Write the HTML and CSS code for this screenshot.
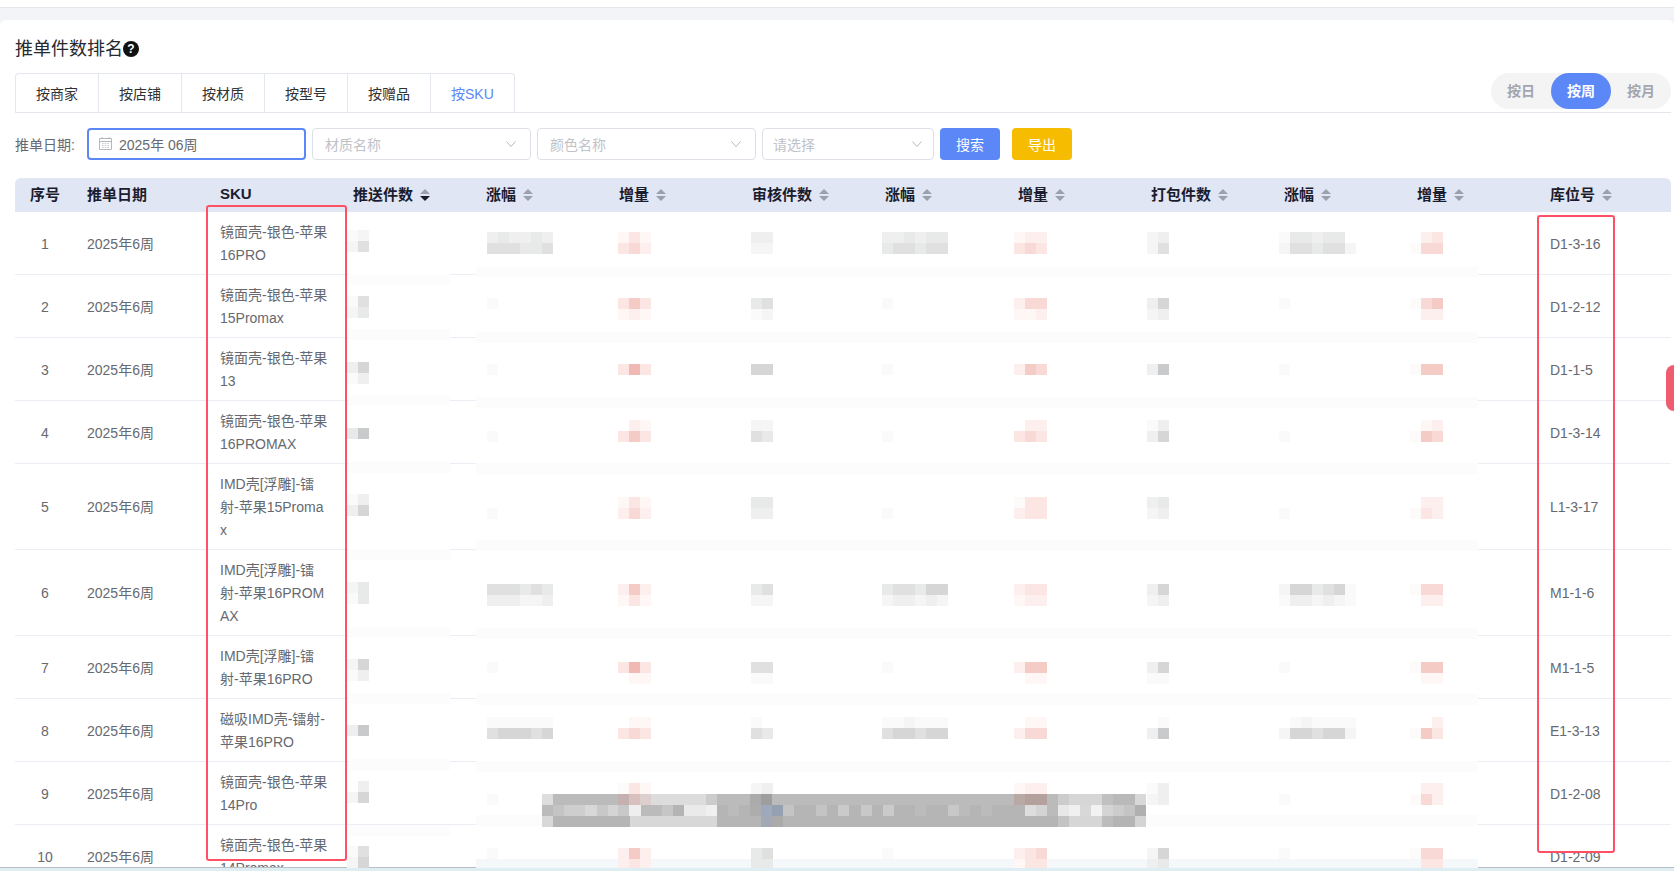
FILE: index.html
```html
<!DOCTYPE html>
<html lang="zh-CN">
<head>
<meta charset="utf-8">
<title>推单件数排名</title>
<link rel="stylesheet" href="styles.css">
</head>
<body>
<div class="page">
  <div class="topbar"></div>
  <div class="band"></div>
  <main class="card">
    <h1 class="title">推单件数排名<span class="help">?</span></h1>
    <div class="tabbar">
      <div class="tabs">
        <div class="tab">按商家</div>
        <div class="tab">按店铺</div>
        <div class="tab">按材质</div>
        <div class="tab">按型号</div>
        <div class="tab">按赠品</div>
        <div class="tab active">按SKU</div>
      </div>
      <div class="pill">
        <div class="pill-item">按日</div>
        <div class="pill-item on">按周</div>
        <div class="pill-item">按月</div>
      </div>
    </div>
    <div class="filters">
      <label class="flabel">推单日期:</label>
      <div class="field date">
        <svg class="cal" viewBox="0 0 13 13"><path d="M.5 1.5h12v11H.5zM.5 4.5h12M3 0v2M10 0v2" fill="none" stroke="#b4b7bd"/><path d="M3 6.5h7M3 8.5h7M3 10.5h7" stroke="#c4c7cc" stroke-dasharray="1.5 1.2"/></svg>
        <span>2025年 06周</span>
      </div>
      <div class="field"><span class="ph">材质名称</span><svg class="chev" viewBox="0 0 10 6"><path d="M.5.5 5 5.5 9.5.5" fill="none" stroke="#b4b7bd"/></svg></div>
      <div class="field"><span class="ph">颜色名称</span><svg class="chev" viewBox="0 0 10 6"><path d="M.5.5 5 5.5 9.5.5" fill="none" stroke="#b4b7bd"/></svg></div>
      <div class="field w172"><span class="ph">请选择</span><svg class="chev" viewBox="0 0 10 6"><path d="M.5.5 5 5.5 9.5.5" fill="none" stroke="#b4b7bd"/></svg></div>
      <button class="btn search">搜索</button>
      <button class="btn export">导出</button>
    </div>
    <table class="grid">
      <colgroup>
        <col class="c-no"><col class="c"><col class="c"><col class="c"><col class="c"><col class="c"><col class="c"><col class="c"><col class="c"><col class="c"><col class="c"><col class="c"><col class="c-last">
      </colgroup>
      <thead>
        <tr>
          <th class="no">序号</th>
          <th>推单日期</th>
          <th>SKU</th>
          <th>推送件数<svg class="sort" viewBox="0 0 10 12"><path d="M5 0l5 5H0z"/><path class="down" d="M0 7h10l-5 5z"/></svg></th>
          <th>涨幅<svg class="sort" viewBox="0 0 10 12"><path d="M5 0l5 5H0zM0 7h10l-5 5z"/></svg></th>
          <th>增量<svg class="sort" viewBox="0 0 10 12"><path d="M5 0l5 5H0zM0 7h10l-5 5z"/></svg></th>
          <th>审核件数<svg class="sort" viewBox="0 0 10 12"><path d="M5 0l5 5H0zM0 7h10l-5 5z"/></svg></th>
          <th>涨幅<svg class="sort" viewBox="0 0 10 12"><path d="M5 0l5 5H0zM0 7h10l-5 5z"/></svg></th>
          <th>增量<svg class="sort" viewBox="0 0 10 12"><path d="M5 0l5 5H0zM0 7h10l-5 5z"/></svg></th>
          <th>打包件数<svg class="sort" viewBox="0 0 10 12"><path d="M5 0l5 5H0zM0 7h10l-5 5z"/></svg></th>
          <th>涨幅<svg class="sort" viewBox="0 0 10 12"><path d="M5 0l5 5H0zM0 7h10l-5 5z"/></svg></th>
          <th>增量<svg class="sort" viewBox="0 0 10 12"><path d="M5 0l5 5H0zM0 7h10l-5 5z"/></svg></th>
          <th>库位号<svg class="sort" viewBox="0 0 10 12"><path d="M5 0l5 5H0zM0 7h10l-5 5z"/></svg></th>
        </tr>
      </thead>
      <tbody>
        <tr><td class="no">1</td><td>2025年6周</td><td class="sku">镜面壳-银色-苹果16PRO</td><td></td><td></td><td></td><td></td><td></td><td></td><td></td><td></td><td></td><td>D1-3-16</td></tr>
        <tr><td class="no">2</td><td>2025年6周</td><td class="sku">镜面壳-银色-苹果15Promax</td><td></td><td></td><td></td><td></td><td></td><td></td><td></td><td></td><td></td><td>D1-2-12</td></tr>
        <tr><td class="no">3</td><td>2025年6周</td><td class="sku">镜面壳-银色-苹果13</td><td></td><td></td><td></td><td></td><td></td><td></td><td></td><td></td><td></td><td>D1-1-5</td></tr>
        <tr><td class="no">4</td><td>2025年6周</td><td class="sku">镜面壳-银色-苹果16PROMAX</td><td></td><td></td><td></td><td></td><td></td><td></td><td></td><td></td><td></td><td>D1-3-14</td></tr>
        <tr><td class="no">5</td><td>2025年6周</td><td class="sku">IMD壳[浮雕]-镭射-苹果15Promax</td><td></td><td></td><td></td><td></td><td></td><td></td><td></td><td></td><td></td><td>L1-3-17</td></tr>
        <tr><td class="no">6</td><td>2025年6周</td><td class="sku">IMD壳[浮雕]-镭射-苹果16PROMAX</td><td></td><td></td><td></td><td></td><td></td><td></td><td></td><td></td><td></td><td>M1-1-6</td></tr>
        <tr><td class="no">7</td><td>2025年6周</td><td class="sku">IMD壳[浮雕]-镭射-苹果16PRO</td><td></td><td></td><td></td><td></td><td></td><td></td><td></td><td></td><td></td><td>M1-1-5</td></tr>
        <tr><td class="no">8</td><td>2025年6周</td><td class="sku">磁吸IMD壳-镭射-苹果16PRO</td><td></td><td></td><td></td><td></td><td></td><td></td><td></td><td></td><td></td><td>E1-3-13</td></tr>
        <tr><td class="no">9</td><td>2025年6周</td><td class="sku">镜面壳-银色-苹果14Pro</td><td></td><td></td><td></td><td></td><td></td><td></td><td></td><td></td><td></td><td>D1-2-08</td></tr>
        <tr><td class="no">10</td><td>2025年6周</td><td class="sku">镜面壳-银色-苹果14Promax</td><td></td><td></td><td></td><td></td><td></td><td></td><td></td><td></td><td></td><td>D1-2-09</td></tr>
      </tbody>
    </table>
  </main>
  <div class="foot"></div>

  <!-- pixelated redaction that lies over the table -->
  <svg class="mosaic" width="1674" height="868" viewBox="0 0 1674 868">
    <path class="bandpatch" d="M476 271.5H1478M476 337.5H1478M476 402.5H1478M476 468.5H1478M476 545.5H1478M476 633.5H1478M476 699.5H1478M476 766.5H1478M476 820.5H1478M348 279.5H450M348 334.5H450M348 400.5H450M348 467.5H450M348 554.5H450M348 632.5H450M348 698.5H450M348 764.5H450M348 830.5H450"/>
    <path class="botpatch" d="M476 863.5H1478"/>

    <!-- row 1 -->
    <g transform="translate(0 235.5)"><path class="g1" d="M347 0h11"/><path class="g2" d="M358 0h11"/></g>
    <g transform="translate(0 246.5)"><path class="g2" d="M347 0h11"/><path class="g5" d="M358 0h11"/></g>
    <g transform="translate(0 237.5)"><path class="g1" d="M1279 0h11"/><path class="g2" d="M1147 0h11"/><path class="g3" d="M487 0h11M509 0h22M542 0h11M751 0h22M882 0h22M915 0h11M1158 0h11M1312 0h11"/><path class="g4" d="M498 0h11M531 0h11M904 0h11M926 0h22M1290 0h22M1323 0h22"/><path class="p1" d="M618 0h11M640 0h11M1014 0h11"/><path class="p2" d="M1025 0h22M1421 0h11"/><path class="p3" d="M629 0h11M1432 0h11"/></g>
    <g transform="translate(0 248.5)"><path class="p0" d="M1410 0h11"/><path class="g2" d="M751 0h22M1147 0h11M1279 0h11M1345 0h11"/><path class="g4" d="M520 0h22M882 0h11M915 0h11M1312 0h11"/><path class="g5" d="M487 0h33M542 0h11M893 0h22M926 0h22M1158 0h11M1290 0h22M1323 0h22"/><path class="p2" d="M640 0h11"/><path class="p3" d="M618 0h11M1014 0h11M1036 0h11"/><path class="p4" d="M629 0h11M1025 0h11M1421 0h22"/></g>

    <!-- row 2 -->
    <g transform="translate(0 301.5)"><path class="g1" d="M347 0h11"/><path class="g5" d="M358 0h11"/></g>
    <g transform="translate(0 312.5)"><path class="g2" d="M347 0h11"/><path class="g4" d="M358 0h11"/></g>
    <g transform="translate(0 303.5)"><path class="p0" d="M1410 0h11"/><path class="g1" d="M487 0h11M882 0h11M1279 0h11"/><path class="g3" d="M1147 0h11"/><path class="g4" d="M751 0h11"/><path class="g5" d="M762 0h11"/><path class="g6" d="M1158 0h11"/><path class="p2" d="M1014 0h11"/><path class="p3" d="M618 0h11M640 0h11"/><path class="p4" d="M1025 0h22M1421 0h11"/><path class="p5" d="M629 0h11M1432 0h11"/></g>
    <g transform="translate(0 314.5)"><path class="g1" d="M751 0h11"/><path class="g2" d="M762 0h11M1147 0h11"/><path class="g3" d="M1158 0h11"/><path class="p1" d="M618 0h11M640 0h11M1014 0h22"/><path class="p2" d="M629 0h11M1036 0h11M1421 0h22"/></g>

    <!-- row 3 -->
    <g transform="translate(0 367.5)"><path class="g3" d="M347 0h11"/><path class="g6" d="M358 0h11"/></g>
    <g transform="translate(0 378.5)"><path class="g1" d="M347 0h11"/><path class="g3" d="M358 0h11"/></g>
    <g transform="translate(0 369.5)"><path class="p0" d="M1410 0h11"/><path class="g1" d="M487 0h11M882 0h11M1279 0h11"/><path class="g3" d="M1147 0h11"/><path class="g6" d="M751 0h22"/><path class="g7" d="M1158 0h11"/><path class="p2" d="M1014 0h11"/><path class="p3" d="M618 0h11M640 0h11"/><path class="p4" d="M1036 0h11"/><path class="p5" d="M1025 0h11M1421 0h22"/><path class="p6" d="M629 0h11"/></g>

    <!-- row 4 -->
    <g transform="translate(0 433.5)"><path class="g4" d="M347 0h11"/><path class="g7" d="M358 0h11"/></g>
    <g transform="translate(0 425.5)"><path class="g1" d="M1147 0h11"/><path class="g2" d="M751 0h22"/><path class="g3" d="M1158 0h11"/><path class="p1" d="M640 0h11M1421 0h11"/><path class="p2" d="M629 0h11M1025 0h22M1432 0h11"/></g>
    <g transform="translate(0 436.5)"><path class="p0" d="M1410 0h11"/><path class="g1" d="M487 0h11M882 0h11M1279 0h11"/><path class="g3" d="M1147 0h11"/><path class="g4" d="M762 0h11"/><path class="g5" d="M751 0h11"/><path class="g6" d="M1158 0h11"/><path class="p3" d="M618 0h11M640 0h11M1014 0h11M1036 0h11"/><path class="p4" d="M1025 0h11M1432 0h11"/><path class="p5" d="M629 0h11M1421 0h11"/></g>

    <!-- row 5 -->
    <g transform="translate(0 499.5)"><path class="g1" d="M347 0h11"/><path class="g3" d="M358 0h11"/></g>
    <g transform="translate(0 510.5)"><path class="g3" d="M347 0h11"/><path class="g6" d="M358 0h11"/></g>
    <g transform="translate(0 502.5)"><path class="p0" d="M1014 0h11"/><path class="g3" d="M1147 0h11"/><path class="g4" d="M751 0h22M1158 0h11"/><path class="p1" d="M618 0h11M640 0h11"/><path class="p2" d="M1421 0h22"/><path class="p3" d="M629 0h11M1025 0h22"/></g>
    <g transform="translate(0 513.5)"><path class="p0" d="M1410 0h11"/><path class="g1" d="M487 0h11M882 0h11M1279 0h11"/><path class="g2" d="M1147 0h11"/><path class="g3" d="M751 0h22M1158 0h11"/><path class="p2" d="M618 0h11M640 0h11M1014 0h11M1432 0h11"/><path class="p3" d="M1025 0h22M1421 0h11"/><path class="p4" d="M629 0h11"/></g>

    <!-- row 6 -->
    <g transform="translate(0 587.5)"><path class="g2" d="M347 0h11"/><path class="g4" d="M358 0h11"/></g>
    <g transform="translate(0 598.5)"><path class="g1" d="M347 0h11"/><path class="g4" d="M358 0h11"/></g>
    <g transform="translate(0 589.5)"><path class="p0" d="M1410 0h11"/><path class="g1" d="M1345 0h11"/><path class="g2" d="M1279 0h11"/><path class="g3" d="M1147 0h11"/><path class="g4" d="M520 0h11M542 0h11M751 0h11M882 0h11M915 0h11M1312 0h11"/><path class="g5" d="M487 0h33M531 0h11M762 0h11M893 0h22M1323 0h11"/><path class="g6" d="M926 0h22M1158 0h11M1290 0h22M1334 0h11"/><path class="p2" d="M618 0h11M640 0h11M1014 0h11"/><path class="p3" d="M1025 0h22"/><path class="p4" d="M1421 0h22"/><path class="p5" d="M629 0h11"/></g>
    <g transform="translate(0 600.5)"><path class="g1" d="M1279 0h11M1345 0h11"/><path class="g2" d="M520 0h22M751 0h22M882 0h11M915 0h11M937 0h11M1147 0h11M1312 0h11M1334 0h11"/><path class="g3" d="M487 0h33M542 0h11M893 0h22M926 0h11M1158 0h11M1290 0h22M1323 0h11"/><path class="p1" d="M618 0h11M640 0h11M1014 0h11"/><path class="p2" d="M1025 0h22M1421 0h22"/><path class="p3" d="M629 0h11"/></g>

    <!-- row 7 -->
    <g transform="translate(0 664.5)"><path class="g2" d="M347 0h11"/><path class="g6" d="M358 0h11"/></g>
    <g transform="translate(0 675.5)"><path class="g1" d="M347 0h11"/><path class="g3" d="M358 0h11"/></g>
    <g transform="translate(0 667.5)"><path class="p0" d="M1410 0h11"/><path class="g1" d="M487 0h11M882 0h11M1279 0h11"/><path class="g3" d="M1147 0h11"/><path class="g5" d="M751 0h22"/><path class="g6" d="M1158 0h11"/><path class="p2" d="M1014 0h11"/><path class="p3" d="M618 0h11M640 0h11"/><path class="p5" d="M1025 0h22M1421 0h22"/><path class="p6" d="M629 0h11"/></g>
    <g transform="translate(0 678.5)"><path class="g1" d="M751 0h22M1147 0h22"/><path class="p1" d="M629 0h22M1025 0h22M1421 0h22"/></g>

    <!-- row 8 -->
    <g transform="translate(0 730.5)"><path class="g3" d="M347 0h11"/><path class="g7" d="M358 0h11"/></g>
    <g transform="translate(0 722.5)"><path class="g1" d="M487 0h66M751 0h11M882 0h66M1158 0h11M1290 0h66"/><path class="g2" d="M904 0h11M1301 0h11"/><path class="p1" d="M629 0h22M1025 0h22"/><path class="p2" d="M1432 0h11"/></g>
    <g transform="translate(0 733.5)"><path class="p0" d="M1410 0h11"/><path class="g2" d="M1279 0h11M1345 0h11"/><path class="g3" d="M1147 0h11"/><path class="g4" d="M762 0h11"/><path class="g5" d="M487 0h11M531 0h11M751 0h11M882 0h11M915 0h11M1312 0h11"/><path class="g6" d="M498 0h33M542 0h11M893 0h22M926 0h22M1290 0h22M1323 0h22"/><path class="g7" d="M1158 0h11"/><path class="p2" d="M1014 0h11"/><path class="p3" d="M618 0h11M640 0h11M1432 0h11"/><path class="p4" d="M629 0h11M1025 0h22"/><path class="p5" d="M1421 0h11"/></g>

    <!-- row 9 -->
    <g transform="translate(0 786.5)"><path class="g3" d="M358 0h11"/></g>
    <g transform="translate(0 797.5)"><path class="g2" d="M347 0h11"/><path class="g6" d="M358 0h11"/></g>
    <g transform="translate(0 788.5)"><path class="p0" d="M618 0h11"/><path class="g1" d="M1147 0h11"/><path class="g2" d="M751 0h11"/><path class="g3" d="M762 0h11M1158 0h11"/><path class="p1" d="M640 0h11M1014 0h11"/><path class="p2" d="M1025 0h22M1421 0h22"/><path class="p3" d="M629 0h11"/></g>
    <g transform="translate(0 799.5)"><path class="p0" d="M1410 0h11"/><path class="g1" d="M487 0h11M1279 0h11"/><path class="g2" d="M1147 0h11"/><path class="g3" d="M1158 0h11"/><path class="p2" d="M1432 0h11"/><path class="p4" d="M1421 0h11"/></g>

    <!-- row 10 -->
    <g transform="translate(0 851.5)"><path class="g1" d="M347 0h11"/><path class="g5" d="M358 0h11"/></g>
    <g transform="translate(0 862.5)"><path class="g2" d="M347 0h11"/><path class="g6" d="M358 0h11"/></g>
    <g transform="translate(0 853.5)"><path class="p0" d="M1410 0h11"/><path class="g1" d="M487 0h11M882 0h11M1279 0h11"/><path class="g2" d="M1147 0h11"/><path class="g4" d="M751 0h11"/><path class="g5" d="M762 0h11"/><path class="g6" d="M1158 0h11"/><path class="p2" d="M618 0h11M640 0h11M1014 0h11"/><path class="p3" d="M1025 0h11"/><path class="p4" d="M1036 0h11M1421 0h22"/><path class="p5" d="M629 0h11"/></g>
    <g transform="translate(0 864.5)"><path class="g3" d="M1147 0h11"/><path class="g4" d="M751 0h22M1158 0h11"/><path class="p1" d="M1014 0h11"/><path class="p2" d="M618 0h11M640 0h11"/><path class="p3" d="M629 0h11M1025 0h22M1421 0h22"/></g>

    <!-- wide strip -->
    <g class="strip" transform="translate(0 799)">
      <path stroke="#ddd" d="M542 0h11"/><path stroke="#bbb" d="M553 0h65M717 0h33M772 0h242M1047 0h11"/>
      <path stroke="#c4b0ae" d="M618 0h11"/><path stroke="#d8c0be" d="M629 0h11"/><path stroke="#dccfce" d="M640 0h11"/>
      <path stroke="#dcdcdc" d="M651 0h55"/><path stroke="#ccc" d="M706 0h11M1058 0h11"/>
      <path stroke="#ababab" d="M750 0h11"/><path stroke="#9e9e9e" d="M761 0h11"/>
      <path stroke="#b9a9a5" d="M1014 0h11"/><path stroke="#b4a09c" d="M1025 0h22"/>
      <path stroke="#d6d6d6" d="M1069 0h33"/><path stroke="#c0c0c0" d="M1102 0h11"/><path stroke="#b9b9b9" d="M1113 0h22"/><path stroke="#d8d8d8" d="M1135 0h11"/>
    </g>
    <g class="strip" transform="translate(0 810)">
      <path stroke="#b5b5b5" d="M717 0h429"/>
      <path stroke="#bbb" d="M542 0h11M641 0h21M728 0h11M915 0h11M959 0h11M981 0h11M1047 0h11"/>
      <path stroke="#c4c4c4" d="M553 0h11M783 0h11M816 0h11M1124 0h11"/><path stroke="#cecece" d="M564 0h21"/><path stroke="#d8d8d8" d="M585 0h12M1080 0h11"/>
      <path stroke="#c8c8c8" d="M597 0h11M618 0h11M861 0h11M948 0h11"/><path stroke="#d4d4d4" d="M608 0h10M1036 0h11M1102 0h11"/><path stroke="#eee" d="M629 0h12"/>
      <path stroke="#c6c6c6" d="M662 0h11"/><path stroke="#b4b4b4" d="M673 0h11"/><path stroke="#eaeaea" d="M684 0h22"/><path stroke="#f0f0f0" d="M706 0h11M1069 0h11"/>
      <path stroke="#adadad" d="M750 0h11"/><path stroke="#a0a8bb" d="M761 0h11"/><path stroke="#95a0b0" d="M772 0h11"/>
      <path stroke="#cacaca" d="M838 0h11M883 0h11"/><path stroke="#ddd" d="M1025 0h11"/><path stroke="#e8e8e8" d="M1058 0h11"/><path stroke="#f2f2f2" d="M1091 0h11"/><path stroke="#ccc" d="M1113 0h11"/><path stroke="#b0b0b0" d="M1135 0h11"/>
    </g>
    <g class="strip" transform="translate(0 821)">
      <path stroke="#d8d8d8" d="M542 0h11M630 0h87"/><path stroke="#b5b5b5" d="M553 0h77M717 0h44M783 0h275"/>
      <path stroke="#a2a8b5" d="M761 0h11"/><path stroke="#aaa" d="M772 0h11"/>
      <path stroke="#c4c4c4" d="M1058 0h11"/><path stroke="#d6d6d6" d="M1069 0h33"/><path stroke="#bcbcbc" d="M1102 0h11"/><path stroke="#b4b4b4" d="M1113 0h22"/><path stroke="#d4d4d4" d="M1135 0h11"/>
    </g>
  </svg>

  <div class="mark mark-sku"></div>
  <div class="mark mark-loc"></div>
  <div class="side-tab"></div>
</div>
</body>
</html>
```
FILE: styles.css
```css
* { box-sizing: border-box; }
html, body { margin: 0; padding: 0; background: #fff; }
body {
  font-family: "Liberation Sans", "Noto Sans CJK SC", sans-serif;
  font-size: 14px;
  color: #666970;
}
.page {
  position: relative;
  width: 1674px;
  height: 871px;
  overflow: hidden;
  display: flex;
  flex-direction: column;
  background: #f2f4f8;
}
.topbar { height: 8px; flex: none; border-bottom: 1px solid #e4e7ec; background: #fff; }
.band { height: 12px; flex: none; background: #f2f4f8; }
.card {
  flex: 1;
  min-height: 0;
  overflow: hidden;
  background: #fff;
  padding: 0 3px 0 15px;
  border-radius: 6px 6px 0 0;
  border-bottom: 1px solid #b9c0c4;
}
.foot { height: 3px; flex: none; background: #dfeef3; }

.title {
  margin: 0;
  padding-top: 17px;
  font-size: 18px;
  font-weight: 400;
  line-height: 24px;
  color: #26282d;
  display: flex;
  align-items: center;
}
.help {
  width: 16px;
  height: 16px;
  border-radius: 50%;
  background: #111;
  color: #fff;
  font-size: 12px;
  font-weight: 700;
  line-height: 16px;
  text-align: center;
}

.tabbar {
  margin-top: 12px;
  height: 40px;
  display: flex;
  justify-content: space-between;
  align-items: flex-start;
  border-bottom: 1px solid #e4e7ed;
}
.tabs {
  display: flex;
  height: 40px;
  border: 1px solid #e4e7ed;
  border-bottom: 0;
  border-radius: 4px 4px 0 0;
}
.tab {
  padding: 0 20px;
  line-height: 40px;
  color: #303133;
  border-left: 1px solid #e4e7ed;
}
.tab:first-child { border-left: 0; }
.tab.active { color: #5b87f7; }
.pill {
  display: flex;
  height: 36px;
  background: #f4f4f5;
  border-radius: 18px;
}
.pill-item {
  width: 60px;
  line-height: 36px;
  text-align: center;
  font-weight: 700;
  color: #a3a6af;
}
.pill-item.on {
  color: #fff;
  background: #5b87f7;
  border-radius: 18px;
}

.filters {
  margin-top: 15px;
  height: 32px;
  display: flex;
  align-items: center;
  gap: 6px;
}
.flabel { width: 66px; flex: none; white-space: nowrap; }
.field {
  height: 32px;
  width: 219px;
  flex: none;
  display: flex;
  align-items: center;
  justify-content: space-between;
  padding: 0 14px 1px 12px;
  border: 1px solid #dcdfe6;
  border-radius: 4px;
  background: #fff;
}
.field.w172 { width: 172px; padding: 0 11px 1px 10px; }
.field.date {
  justify-content: flex-start;
  gap: 7px;
  border: 2px solid #5b87f7;
  padding-left: 10px;
}
.ph { color: #bfc2c9; }
.cal { width: 13px; height: 13px; }
.chev { width: 10px; height: 6px; }
.btn {
  height: 32px;
  width: 60px;
  flex: none;
  padding: 0;
  border: 0;
  border-radius: 4px;
  color: #fff;
  font: inherit;
}
.btn.search { background: #5b87f7; }
.btn.export { background: #f5bc00; margin-left: 6px; }

.grid {
  margin-top: 18px;
  width: 1656px;
  table-layout: fixed;
  border-collapse: separate;
  border-spacing: 0;
}
.c-no { width: 58px; }
.c { width: 133px; }
.c-last { width: 135px; }
.grid th {
  height: 34px;
  padding: 0 14px 4px;
  background: #e1e6f4;
  color: #1b1c2e;
  font-size: 15px;
  font-weight: 700;
  text-align: left;
  white-space: nowrap;
}
.grid th:first-child { border-radius: 6px 0 0 0; }
.grid th:last-child { border-radius: 0 6px 0 0; }
.grid td {
  padding: 10px 14px 8px;
  line-height: 23px;
  border-bottom: 1px solid #ebeef5;
  vertical-align: middle;
}
.grid th.no { padding: 0 0 4px 2px; text-align: center; }
.grid td.no { padding: 10px 0 8px 2px; text-align: center; }
.grid td.sku { padding: 9px 11.5px 7px 14px; word-break: break-all; }
.sort {
  width: 10px;
  height: 12px;
  margin-left: 7px;
  vertical-align: -1px;
  fill: #9aa0ae;
}
.sort .down { fill: #1b1c2e; }

.mosaic { position: absolute; left: 0; top: 0; shape-rendering: crispEdges; }
.mosaic path { fill: none; stroke-width: 11; }
.bandpatch { stroke: #fcfcfc; }
.botpatch { stroke: #f5f8fa; stroke-width: 9 !important; }
.g1 { stroke: #fafafa; }
.g2 { stroke: #f5f5f5; }
.g3 { stroke: #efefef; }
.g4 { stroke: #e8e9e9; }
.g5 { stroke: #e0e0e0; }
.g6 { stroke: #d6d6d6; }
.g7 { stroke: #c9cacb; }
.p0 { stroke: #fdfbfa; }
.p1 { stroke: #fef7f6; }
.p2 { stroke: #fdefee; }
.p3 { stroke: #fbe6e4; }
.p4 { stroke: #f8d9d5; }
.p5 { stroke: #f5cbc6; }
.p6 { stroke: #f0b9b3; }

.mark {
  position: absolute;
  border: 2px solid #ff5066;
  border-radius: 3px;
}
.mark-sku { left: 206px; top: 205px; width: 141px; height: 656px; }
.mark-loc { left: 1537px; top: 215px; width: 78px; height: 638px; }
.side-tab {
  position: absolute;
  left: 1666px;
  top: 365px;
  width: 8px;
  height: 46px;
  background: #ef5b6f;
  border-radius: 8px 0 0 8px;
}
```
